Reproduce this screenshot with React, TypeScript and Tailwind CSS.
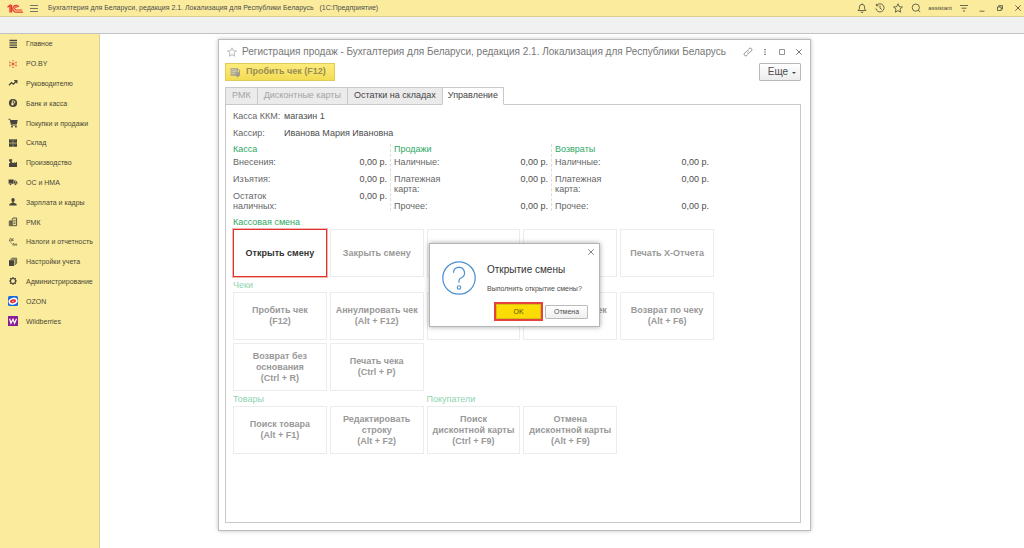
import React, { useState } from 'react';

type Action = { title: string; keys?: string; active?: boolean };
type StatRow = { label: string; value: string };

const ROW_ZERO = '0,00 р.';

const STATS: { title: string; rows: StatRow[] }[] = [
  {
    title: 'Касса',
    rows: [
      { label: 'Внесения:', value: ROW_ZERO },
      { label: 'Изъятия:', value: ROW_ZERO },
      { label: 'Остаток наличных:', value: ROW_ZERO },
    ],
  },
  {
    title: 'Продажи',
    rows: [
      { label: 'Наличные:', value: ROW_ZERO },
      { label: 'Платежная карта:', value: ROW_ZERO },
      { label: 'Прочее:', value: ROW_ZERO },
    ],
  },
  {
    title: 'Возвраты',
    rows: [
      { label: 'Наличные:', value: ROW_ZERO },
      { label: 'Платежная карта:', value: ROW_ZERO },
      { label: 'Прочее:', value: ROW_ZERO },
    ],
  },
];

const SHIFT_ACTIONS: Action[] = [
  { title: 'Открыть смену', active: true },
  { title: 'Закрыть смену' },
  { title: 'Внесение' },
  { title: 'Изъятие' },
  { title: 'Печать X-Отчета' },
];

const CHECK_ACTIONS: Action[] = [
  { title: 'Пробить чек', keys: '(F12)' },
  { title: 'Аннулировать чек', keys: '(Alt + F12)' },
  { title: 'Отложить чек', keys: '(Alt + F7)' },
  { title: 'Продолжить чек', keys: '(Alt + F8)' },
  { title: 'Возврат по чеку', keys: '(Alt + F6)' },
  { title: 'Возврат без основания', keys: '(Ctrl + R)' },
  { title: 'Печать чека', keys: '(Ctrl + P)' },
];

const GOODS_ACTIONS: Action[] = [
  { title: 'Поиск товара', keys: '(Alt + F1)' },
  { title: 'Редактировать строку', keys: '(Alt + F2)' },
];

const CUSTOMER_ACTIONS: Action[] = [
  { title: 'Поиск\nдисконтной карты', keys: '(Ctrl + F9)' },
  { title: 'Отмена\nдисконтной карты', keys: '(Alt + F9)' },
];

const MENU: { label: string; icon: React.ReactNode }[] = [
  { label: 'Главное', icon: <path d="M1.5 1.5h7.5M1.5 3.8h7.5M1.5 6.1h7.5M1.5 8.4h7.5" stroke="currentColor" strokeWidth="1.3" /> },
  {
    label: 'PO.BY',
    icon: (
      <g fill="#e2503a">
        <circle cx="5" cy="5" r="1.1" />
        <circle cx="5" cy="1.6" r="0.7" />
        <circle cx="5" cy="8.4" r="0.7" />
        <circle cx="1.9" cy="3.3" r="0.7" />
        <circle cx="8.1" cy="3.3" r="0.7" />
        <circle cx="1.9" cy="6.8" r="0.7" />
        <circle cx="8.1" cy="6.8" r="0.7" />
        <path d="M5 5V2.500M5 5v2.500M5 5L2.500 3.600M5 5l2.500-1.400M5 5L2.500 6.400M5 5l2.500 1.400M1 5h1.500M7.500 5H9" stroke="#e2503a" strokeWidth="0.500" />
      </g>
    ),
  },
  {
    label: 'Руководителю',
    icon: <path d="M1 7.2l2.5-2.6 1.8 1.6L8.6 3M6.2 2.7h2.6v2.6" fill="none" stroke="currentColor" strokeWidth="1.3" />,
  },
  {
    label: 'Банк и касса',
    icon: (
      <>
        <circle cx="5" cy="5" r="4.1" fill="currentColor" />
        <path d="M4.3 7.6V2.900h1.400a1.200 1.200 0 0 1 0 2.400H3.300M3.300 6.500h2.400" fill="none" stroke="#faec9c" strokeWidth="0.9" />
      </>
    ),
  },
  {
    label: 'Покупки и продажи',
    icon: (
      <>
        <path d="M2.200 2h7.500l-.9 4.200H3.200z" fill="currentColor" />
        <path d="M0.500 1.300h1.600l1.400 5.800h5.200" fill="none" stroke="currentColor" strokeWidth="0.9" />
        <circle cx="4" cy="8.700" r="0.9" fill="currentColor" />
        <circle cx="7.900" cy="8.700" r="0.9" fill="currentColor" />
      </>
    ),
  },
  {
    label: 'Склад',
    icon: (
      <>
        <path d="M1 1.200h3.800v3.500H1zM5.200 1.200H9v3.500H5.200zM1 5.200h3.800v3.500H1zM5.200 5.200H9v3.500H5.200z" fill="currentColor" />
        <path d="M2.900 1.200v1.200M7.100 1.200v1.200M2.900 5.200v1.200M7.100 5.200v1.200" stroke="#faec9c" strokeWidth="0.400" />
      </>
    ),
  },
  {
    label: 'Производство',
    icon: <path d="M1 9V5.4l1.6-1.2L1 3V1.2h3.2v1.5H3.3l1.5 2.6 2-1.4v1.4l2.2-1.6V9z" fill="currentColor" />,
  },
  {
    label: 'ОС и НМА',
    icon: (
      <>
        <path d="M0.6 2.4h5v4.4h-5zM6 3.6h1.9l1.5 1.6v1.6H6z" fill="currentColor" />
        <path d="M6.8 4.2h.9l.8 1H6.8z" fill="#faec9c" />
        <circle cx="2.5" cy="7.2" r="1.1" fill="currentColor" stroke="#faec9c" strokeWidth="0.4" />
        <circle cx="7.4" cy="7.2" r="1.1" fill="currentColor" stroke="#faec9c" strokeWidth="0.4" />
      </>
    ),
  },
  {
    label: 'Зарплата и кадры',
    icon: (
      <>
        <ellipse cx="5" cy="3" rx="1.700" ry="2" fill="currentColor" />
        <path d="M4.300 4.500h1.400v1.300l2.600 1c.3.400.4 1 .4 1.700H1.300c0-.7.1-1.300.4-1.700l2.600-1z" fill="currentColor" />
      </>
    ),
  },
  {
    label: 'РМК',
    icon: (
      <>
        <path d="M1.300 4h2.400v4.700H1.300zM4.200 2.200L5 1h3.600v7.700H4.200z" fill="none" stroke="currentColor" strokeWidth="0.9" />
        <path d="M5.300 3.300h2.300M5.300 5h2.300M5.300 6.700h2.300M2.500 4v4" stroke="currentColor" strokeWidth="0.8" />
      </>
    ),
  },
  {
    label: 'Налоги и отчетность',
    icon: (
      <path
        d="M1.300 4l.8-2.500h1.200V4M1 4h2.700M4.500 1.500V4M4.500 2.700l1.300-1.200M4.500 2.700L5.600 4M2.500 5.300l1.700 1.500M5 8.700V6.500h1v2.200M7 6.500v2.200M7 7.600h1.300M8.600 6.500v2.200"
        fill="none"
        stroke="currentColor"
        strokeWidth="0.6"
      />
    ),
  },
  {
    label: 'Настройки учета',
    icon: (
      <>
        <path d="M1 3.200h5.200V9H1z" fill="currentColor" />
        <path d="M2.300 2.200h5v5.800M3.600 1.200h5v5.600" fill="none" stroke="currentColor" strokeWidth="0.8" />
      </>
    ),
  },
  {
    label: 'Администрирование',
    icon: (
      <>
        <circle cx="5" cy="5" r="2.500" fill="none" stroke="currentColor" strokeWidth="1.100" />
        <path d="M5 1v1.500M5 7.500V9M1 5h1.500M7.500 5H9M2.200 2.200l1 1M6.800 6.800l1 1M2.200 7.800l1-1M6.800 3.200l1-1" stroke="currentColor" strokeWidth="1.200" />
      </>
    ),
  },
  {
    label: 'OZON',
    icon: (
      <>
        <rect width="10" height="10" rx="1.5" fill="#1769e0" />
        <ellipse cx="5" cy="5.200" rx="4.600" ry="3.400" fill="#fff" transform="rotate(-18 5 5)" />
        <ellipse cx="5" cy="5.200" rx="3.100" ry="1.900" fill="#ee2b35" transform="rotate(-12 5 5)" />
        <ellipse cx="5" cy="5.200" rx="1.200" ry="0.500" fill="#fbb" />
      </>
    ),
  },
  {
    label: 'Wildberries',
    icon: (
      <>
        <rect width="10" height="10" rx="0.5" fill="#8c1b97" />
        <path d="M1.600 2.800l1.400 4.400L5 3.200l1.600 4L8.500 2.800" fill="none" stroke="#fff" strokeWidth="1.200" />
      </>
    ),
  },
];

export default function App() {
  const [dialogOpen, setDialogOpen] = useState(true);

  return (
    <div className="flex min-h-screen flex-col bg-white font-['Liberation_Sans',Arial,sans-serif] text-[#4d4d4d]">
      <TopBar />
      <div className="h-[17px] border-b border-[#c2c2c2] bg-[#f1f1f1]" />

      <div className="flex flex-1">
        <nav className="w-[100px] shrink-0 border-r border-[#d9cf97] bg-[#faec9c]">
          <div className="grid h-[297px] auto-rows-fr">
            {MENU.map(item => (
              <a key={item.label} href="#" className="flex items-center gap-2 pl-2 text-[7px] leading-none whitespace-nowrap text-[#4a4637]">
                <svg viewBox="0 0 10 10" className="size-[10px] shrink-0 text-[#46443c]">{item.icon}</svg>
                {item.label}
              </a>
            ))}
          </div>
        </nav>

        <main className="flex min-w-0 flex-1 pt-[5px] pr-[213px] pb-[17px] pl-[118px]">
          <section className="relative flex min-w-0 flex-1 flex-col border border-[#bdbdbd] px-[6px] pb-[7px] shadow-[0_0_4px_rgba(0,0,0,0.25)]">
            <WindowTitle />

            <div className="flex h-[18px] items-stretch justify-between">
              <button className="flex w-[110px] items-center gap-[5px] border border-[#e0cb55] bg-linear-to-b from-[#fdec7c] to-[#f3dc52] pl-1 text-[9px] font-bold whitespace-nowrap text-[#998c55]">
                <ReceiptIcon />
                Пробить чек (F12)
              </button>
              <button className="mr-[3px] flex w-[42px] items-center justify-center gap-1 rounded-[1px] border border-[#b9b9b9] bg-linear-to-b from-white to-[#ececec] pl-1 text-[10px] leading-none">
                Еще
                <svg viewBox="0 0 4 2" className="mt-px h-[2px] w-1"><path d="M0 0h4L2 2z" fill="#444" /></svg>
              </button>
            </div>

            <div role="tablist" className="relative z-10 mt-[6px] -mb-px flex h-[18px] text-[9px]">
              <Tab label="РМК" disabled />
              <Tab label="Дисконтные карты" disabled />
              <Tab label="Остатки на складах" />
              <Tab label="Управление" selected />
            </div>

            <div className="mr-[3px] flex-1 border border-[#c9c9c9] px-[7px] pt-[6px] text-[9px] leading-[10px]">
              <dl className="grid grid-cols-[51px_1fr] gap-y-[7px]">
                <dt className="whitespace-nowrap text-[#666]">Касса ККМ:</dt>
                <dd>магазин 1</dd>
                <dt className="text-[#666]">Кассир:</dt>
                <dd>Иванова Мария Ивановна</dd>
              </dl>

              <div className="mt-[6px] grid max-w-[483px] grid-cols-3">
                {STATS.map((group, i) => (
                  <div key={group.title} className={`pr-[7px] ${i > 0 ? '-ml-1 border-l border-dashed border-[#ddd] pl-[3px]' : ''}`}>
                    <h2 className="mb-[3px] text-[#2fa866]">{group.title}</h2>
                    <dl className="grid grid-cols-[1fr_auto] gap-y-[7px]">
                      {group.rows.map(row => (
                        <React.Fragment key={row.label}>
                          <dt className="max-w-[60px] text-[#666]">{row.label}</dt>
                          <dd className="whitespace-nowrap">{row.value}</dd>
                        </React.Fragment>
                      ))}
                    </dl>
                  </div>
                ))}
              </div>

              <div className="mt-[6px] flex max-w-[481px] flex-col gap-[3px]">
                <ActionGroup title="Кассовая смена" titleClass="text-[#2fa866]" actions={SHIFT_ACTIONS} onOpen={() => setDialogOpen(true)} />
                <ActionGroup title="Чеки" titleClass="text-[#8fd3b0]" actions={CHECK_ACTIONS} />
                <div className="grid grid-cols-5 gap-[3px]">
                  <ActionGroup title="Товары" titleClass="text-[#8fd3b0]" actions={GOODS_ACTIONS} narrow />
                  <ActionGroup title="Покупатели" titleClass="text-[#8fd3b0]" actions={CUSTOMER_ACTIONS} narrow />
                </div>
              </div>
            </div>

            {dialogOpen && <ConfirmDialog onClose={() => setDialogOpen(false)} />}
          </section>
        </main>
      </div>
    </div>
  );
}

const TopBar = () => (
  <header className="flex h-[17px] items-center border-b border-[#d8cd92] bg-[#faec9c] pl-[7px] text-[7px]">
    <svg viewBox="0 0 16 9" className="h-[9px] w-4" fill="none" stroke="#e5382f">
      <path d="M0.5 3.200L3 1.200V8.400M4.500 .8V8.400" strokeWidth="1.300" />
      <path d="M11.800 3A3.300 3.300 0 1 0 9 8.100H16" strokeWidth="1.300" />
      <path d="M10.200 3.400A1.500 1.500 0 1 0 9 6H15" strokeWidth="1.100" />
    </svg>
    <button aria-label="Меню" className="ml-[7px]">
      <svg viewBox="0 0 8 8" className="size-2"><path d="M0 1.500h8M0 4.500h8M0 7.500h8" stroke="#555" strokeWidth="0.8" /></svg>
    </button>
    <h1 className="ml-[10px] flex-1 whitespace-pre">
      Бухгалтерия для Беларуси, редакция 2.1. Локализация для Республики Беларусь   (1С:Предприятие)
    </h1>
    <div className="flex items-center gap-2 pr-[1px] text-[#4a473a]">
      <BarButton label="Уведомления">
        <path d="M1 7.500h8L7.600 6V4a2.600 2.600 0 0 0-5.200 0v2zM5 .5v1M4 8.600a1 1 0 0 0 2 0" />
      </BarButton>
      <BarButton label="История">
        <path d="M1.600 2.500A4.100 4.100 0 1 1 .9 5.400M1.400.8v2h2M5 2.500V5.200L6.800 6.400" />
      </BarButton>
      <BarButton label="Избранное">
        <path d="M5 .8l1.300 2.900 3.100.3L7 6.100l.7 3.100L5 7.600 2.300 9.200 3 6.100.6 4l3.100-.3z" />
      </BarButton>
      <BarButton label="Поиск">
        <path d="M4.800 1a3.600 3.600 0 1 0 0 7.200 3.600 3.600 0 0 0 0-7.200zM7.300 7.200L9.200 9.200" />
      </BarButton>
      <span className="-mx-[1px] text-[6px]">assistant</span>
      <BarButton label="Настройки">
        <path d="M1 2.500h8M2.500 5.200h5" />
        <path d="M3.800 7.500h2.400L5 8.900z" fill="currentColor" stroke="none" />
      </BarButton>
      <BarButton label="Свернуть"><path d="M2.500 8.200h5" /></BarButton>
      <BarButton label="Восстановить"><path d="M2.500 4h3.700v3.500H2.500zM3.800 4V2.600h3.700v3.500H6.200" /></BarButton>
      <BarButton label="Закрыть"><path d="M2.300 2.300l5.400 5.400M7.700 2.300L2.300 7.700" /></BarButton>
    </div>
  </header>
);

const BarButton = ({ label, children }: { label: string; children: React.ReactNode }) => (
  <button aria-label={label}>
    <svg viewBox="0 0 10 10" className="size-[10px]" fill="none" stroke="currentColor" strokeWidth="0.8">{children}</svg>
  </button>
);

const WindowTitle = () => (
  <div className="flex h-[23px] items-center text-[#777]">
    <svg viewBox="0 0 10 10" className="ml-[2px] size-[10px]" fill="none" stroke="#aaa" strokeWidth="0.8">
      <path d="M5 .8l1.300 2.900 3.100.3L7 6.100l.7 3.100L5 7.600 2.300 9.200 3 6.100.6 4l3.100-.3z" />
    </svg>
    <h2 className="ml-[5px] flex-1 text-[10px] whitespace-nowrap">
      Регистрация продаж - Бухгалтерия для Беларуси, редакция 2.1. Локализация для Республики Беларусь
    </h2>
    <div className="flex gap-[7px]">
      <BarButton label="Ссылка">
        <path d="M4.200 5.800a1.600 1.600 0 0 0 2.300 0l1.900-1.900a1.600 1.600 0 0 0-2.300-2.300L5.200 2.500M5.800 4.200a1.600 1.600 0 0 0-2.300 0L1.600 6.100a1.600 1.600 0 0 0 2.300 2.300l.9-.9" />
      </BarButton>
      <BarButton label="Еще действия"><path d="M5 2v1.200M5 4.400v1.200M5 6.800V8" strokeWidth="1.3" stroke="#555" /></BarButton>
      <BarButton label="Развернуть"><path d="M2.500 2.500h5v5h-5z" /></BarButton>
      <BarButton label="Закрыть окно"><path d="M2.300 2.300l5.400 5.400M7.700 2.300L2.300 7.700" stroke="#555" /></BarButton>
    </div>
  </div>
);

const ReceiptIcon = () => (
  <svg viewBox="0 0 11 11" className="size-[11px] shrink-0">
    <path d="M0.5 1h7.500v8H0.500z" fill="#b3ad93" />
    <path d="M1.500 2.800h5M1.500 4.600h5M1.500 6.400h3" stroke="#d8d2b4" strokeWidth="0.8" />
    <path d="M6 6l4-1.500v4L7.500 10.500 5.500 8.500z" fill="#a39d88" />
    <path d="M7 2l3 1.500-1 2" fill="none" stroke="#a49d80" />
  </svg>
);

const Tab = ({ label, selected, disabled }: { label: string; selected?: boolean; disabled?: boolean }) => (
  <button
    role="tab"
    aria-selected={!!selected}
    disabled={disabled}
    className={`-mr-px border border-[#c9c9c9] whitespace-nowrap ${selected ? 'border-b-white bg-white px-[5px]' : 'bg-[#ebebeb] px-[6px]'} ${disabled ? 'text-[#a3a3a3]' : 'text-[#444]'}`}
  >
    {label}
  </button>
);

const ActionGroup = ({ title, titleClass, actions, narrow, onOpen }: {
  title: string,
  titleClass: string,
  actions: Action[],
  narrow?: boolean,
  onOpen?: () => void
}) => (
  <div className={narrow ? 'col-span-2' : ''}>
    <h2 className={`mb-[2px] ${titleClass}`}>{title}</h2>
    <div className={`grid gap-[3px] ${narrow ? 'grid-cols-2' : 'grid-cols-5'}`}>
      {actions.map(action => (
        <button
          key={action.title}
          disabled={!action.active}
          onClick={onOpen}
          className={`h-12 border px-1 text-[9px] leading-[11px] font-bold whitespace-pre-line ${action.active ? 'border-[#e0322c] text-[#333] outline outline-[#f3b5b2]' : 'border-[#ececec] text-[#999]'}`}
        >
          {action.title}
          {action.keys && <span className="block">{action.keys}</span>}
        </button>
      ))}
    </div>
  </div>
);

const ConfirmDialog = ({ onClose }: { onClose: () => void }) => (
  <div className="absolute inset-0 z-20 grid place-items-center">
    <div role="dialog" aria-labelledby="dialog-title" className="relative flex h-[84px] w-[171px] border border-[#b5b5b5] bg-white pt-[17px] pl-3 shadow-[0_0_5px_rgba(0,0,0,0.35)]">
      <button aria-label="Закрыть" onClick={onClose} className="absolute top-[3px] right-[3px]">
        <svg viewBox="0 0 10 10" className="block size-[10px]"><path d="M2.200 2.200l5.600 5.600M7.800 2.200l-5.600 5.600" stroke="#666" strokeWidth="0.8" /></svg>
      </button>
      <svg viewBox="0 0 34 34" className="size-[34px] shrink-0" fill="none" stroke="#4a8fd0">
        <circle cx="17" cy="17" r="16.200" strokeWidth="1.200" />
        <path d="M11.500 11.800a5.500 5.500 0 1 1 7.900 5c-1.700.8-2.400 1.500-2.400 3v2" strokeWidth="1.200" />
        <circle cx="17" cy="26.500" r="1.700" strokeWidth="1.100" />
      </svg>
      <div className="ml-[11px] flex-1">
        <h2 id="dialog-title" className="mt-[2px] text-[10px] leading-[14px] text-[#333]">Открытие смены</h2>
        <p className="mt-[7px] text-[7px] leading-[10px] whitespace-nowrap">Выполнить открытие смены?</p>
        <div className="mt-[10px] ml-[9px] flex items-center gap-1 text-[7px] leading-[8px]">
          <button onClick={onClose} className="h-[15px] w-[45px] border border-[#d9bd10] bg-[#fbdc05] text-[#5c5000] outline-2 outline-[#e5423c]">OK</button>
          <button onClick={onClose} className="h-[14px] w-[43px] rounded-[1px] border border-[#bbb] bg-linear-to-b from-white to-[#efefef]">Отмена</button>
        </div>
      </div>
    </div>
  </div>
);
